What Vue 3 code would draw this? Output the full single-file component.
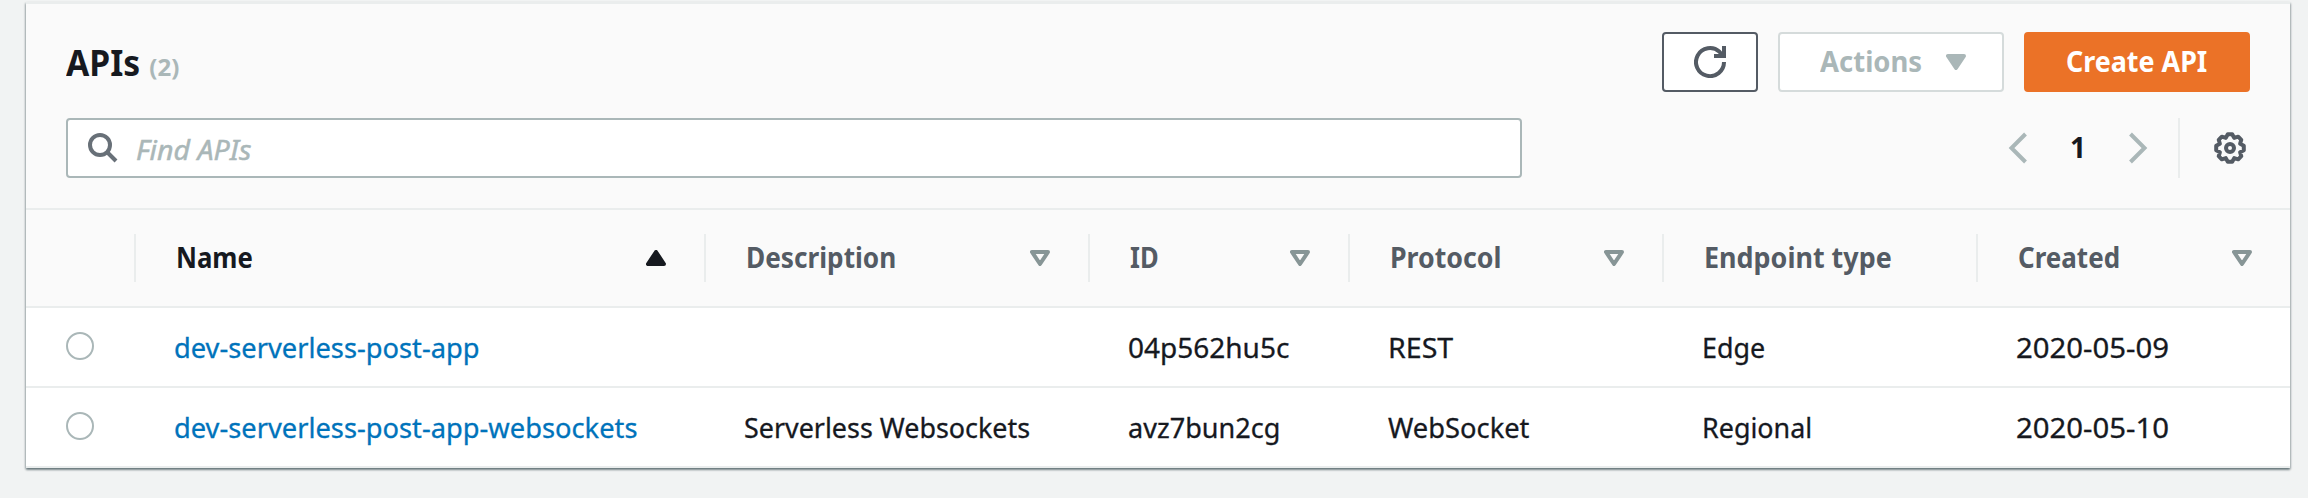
<script setup>
const columns = [
  { key: 'name', label: 'Name', sort: 'asc' },
  { key: 'description', label: 'Description', sort: 'none' },
  { key: 'id', label: 'ID', sort: 'none' },
  { key: 'protocol', label: 'Protocol', sort: 'none' },
  { key: 'endpoint', label: 'Endpoint type', sort: null },
  { key: 'created', label: 'Created', sort: 'none' },
]

const rows = [
  { name: 'dev-serverless-post-app', description: '', id: '04p562hu5c', protocol: 'REST', endpoint: 'Edge', created: '2020-05-09' },
  { name: 'dev-serverless-post-app-websockets', description: 'Serverless Websockets', id: 'avz7bun2cg', protocol: 'WebSocket', endpoint: 'Regional', created: '2020-05-10' },
]
</script>

<template>
  <main class="page">
    <section class="panel">
      <header class="head">
        <div class="title-row">
          <h1 class="title">APIs</h1>
          <span class="count">(2)</span>
          <div class="buttons">
            <button class="btn refresh" aria-label="Refresh">
              <svg width="32" height="32" viewBox="0 0 32 32" fill="none" stroke="#545b64" stroke-width="4">
                <path d="M30 16A14 14 0 1 1 25.5 5.8L29 9.5" />
                <path d="M30 0V10H20" />
              </svg>
            </button>
            <button class="btn actions">
              <span class="t-actions">Actions</span>
              <svg width="20" height="16" viewBox="0 0 20 16"><path d="M2 2H18L10 14Z" fill="#aab7b8" stroke="#aab7b8" stroke-width="4" stroke-linejoin="round" /></svg>
            </button>
            <button class="btn create"><span class="t-create">Create API</span></button>
          </div>
        </div>
        <div class="filter-row">
          <div class="search">
            <svg width="30" height="30" viewBox="0 0 30 30" fill="none" stroke="#687078" stroke-width="4">
              <circle cx="12" cy="12" r="10" />
              <path d="M19 19L28 28" />
            </svg>
            <span class="placeholder">Find APIs</span>
          </div>
          <nav class="pager">
            <svg width="20" height="32" viewBox="0 0 20 32" fill="none" stroke="#aab7b8" stroke-width="4"><path d="M17.5 2L3.5 16L17.5 30" /></svg>
            <span class="page-no">1</span>
            <svg width="20" height="32" viewBox="0 0 20 32" fill="none" stroke="#aab7b8" stroke-width="4"><path d="M2.5 2L16.5 16L2.5 30" /></svg>
          </nav>
          <div class="settings">
            <svg width="32" height="32" viewBox="0 0 32 32" fill="none" stroke="#545b64" stroke-width="4">
              <path stroke-linejoin="round" d="M13.8 2.2H18.2L20.2 5.9L24.2 4.7L27.3 7.8L26.1 11.8L29.8 13.8V18.2L26.1 20.2L27.3 24.2L24.2 27.3L20.2 26.1L18.2 29.8H13.8L11.8 26.1L7.8 27.3L4.7 24.2L5.9 20.2L2.2 18.2V13.8L5.9 11.8L4.7 7.8L7.8 4.7L11.8 5.9Z" />
              <circle cx="16" cy="16" r="4" />
            </svg>
          </div>
        </div>
      </header>

      <div class="grid thead">
        <div class="cell"></div>
        <div v-for="c in columns" :key="c.key" class="cell" :class="{ active: c.sort === 'asc' }">
          <span class="text" :class="'h-' + c.key">{{ c.label }}</span>
          <svg v-if="c.sort === 'asc'" width="20" height="16" viewBox="0 0 20 16"><path d="M2 14H18L10 2Z" fill="#16191f" stroke="#16191f" stroke-width="4" stroke-linejoin="round" /></svg>
          <svg v-else-if="c.sort" width="20" height="16" viewBox="0 0 20 16"><path d="M2 2H18L10 14Z" fill="none" stroke="#879596" stroke-width="4" stroke-linejoin="round" /></svg>
        </div>
      </div>

      <div v-for="(r, i) in rows" :key="r.id" class="grid row">
        <div class="cell"><i class="radio"></i></div>
        <div v-for="c in columns" :key="c.key" class="cell">
          <span class="text" :class="['b-' + c.key, 'r' + i]">{{ r[c.key] }}</span>
        </div>
      </div>
    </section>
  </main>
</template>

<style>
body { background: #f2f3f3; }
</style>

<style scoped>
* { box-sizing: border-box; }
.page {
  height: 498px;
  padding: 2px 18px 0 26px;
  overflow: hidden;
  background: #f1f3f3;
  font-family: "Noto Sans", "Open Sans", sans-serif;
  font-size: 28px;
  line-height: 38px;
  color: #16191f;
  white-space: nowrap;
}
.panel {
  height: 466px;
  border-top: 2px solid #eaeded;
  background: #fff;
  box-shadow: 0 2px 2px 0 rgba(0, 28, 36, 0.4), 1px 1px 2px 0 rgba(0, 28, 36, 0.2), -1px 1px 2px 0 rgba(0, 28, 36, 0.2);
}
.head {
  height: 206px;
  padding: 28px 40px 0;
  background: #fafafa;
  border-bottom: 2px solid #eaeded;
}
.title-row { display: flex; height: 60px; align-items: baseline; }
.title { margin: 0; font-size: 36px; line-height: 61px; font-weight: 700; transform: scaleX(0.935); transform-origin: 0 50%; }
.count { margin-left: 4px; font-size: 24px; font-weight: 700; color: #aab7b8; }
.buttons { display: flex; gap: 20px; margin-left: auto; align-self: flex-start; }
.btn {
  display: flex;
  height: 60px;
  align-items: center;
  justify-content: center;
  padding: 0;
  border: 2px solid;
  border-radius: 4px;
  background: #fff;
  font: inherit;
  font-weight: 700;
}
.btn span { margin-bottom: 2px; }
.refresh { width: 96px; border-color: #545b64; }
.actions { width: 226px; gap: 24px; padding-left: 2px; border-color: #d5dbdb; color: #aab7b8; }
.t-actions { transform: scaleX(0.98); transform-origin: 100% 50%; }
.create { width: 226px; border-color: #eb7227; background: #eb7227; color: #fff; }
.t-create { transform: scaleX(0.96); }
.filter-row { display: flex; height: 60px; margin-top: 26px; align-items: center; }
.search {
  display: flex;
  width: 1456px;
  height: 60px;
  padding-left: 20px;
  align-items: center;
  border: 2px solid #aab7b8;
  border-radius: 4px;
  background: #fff;
}
.placeholder { margin: 2px 0 0 18px; font-style: italic; color: #aab7b8; -webkit-text-stroke: 0.5px; transform: scaleX(1.02); transform-origin: 0 50%; }
.pager { display: flex; width: 140px; margin-left: auto; align-items: center; justify-content: space-between; }
.page-no { margin-bottom: 2px; font-weight: 700; }
.settings { display: flex; width: 72px; height: 60px; margin-left: 30px; padding-left: 34px; align-items: center; border-left: 2px solid #eaeded; }
.grid { display: grid; grid-template-columns: 108px 570px 384px 260px 314px 314px 314px; }
.cell { display: flex; align-items: center; }
.text { transform-origin: 0 50%; }
.thead { height: 98px; padding: 24px 0; border-bottom: 2px solid #eaeded; background: #fafafa; font-weight: 700; color: #545b64; }
.thead .cell { height: 48px; padding: 0 38px 0 40px; justify-content: space-between; border-left: 2px solid #eaeded; }
.thead .cell:first-child { border-left: 0; }
.thead .text { margin-bottom: 2px; }
.thead .active { color: #16191f; }
.h-name { transform: scaleX(0.92); }
.h-description { transform: scaleX(0.936); }
.h-id { transform: scaleX(0.91); }
.h-protocol { transform: scaleX(0.955); }
.h-endpoint { transform: scaleX(0.961); }
.h-created { transform: scaleX(0.928); }
.row { height: 80px; border-bottom: 2px solid #eaeded; }
.row .cell { padding-left: 40px; }
.row .text { -webkit-text-stroke: 0.3px; }
.row .cell:first-child { padding-bottom: 2px; }
.radio { width: 28px; height: 28px; border: 2px solid #aab7b8; border-radius: 50%; }
.b-name { color: #0073bb; transform: scaleX(0.974); }
.b-description { transform: scaleX(0.96); }
.b-id.r1 { transform: scaleX(0.967); }
.b-protocol.r0 { transform: scaleX(1.02); }
.b-protocol.r1 { transform: scaleX(0.975); }
.b-endpoint { transform: scaleX(0.96); }
.b-created { transform: scaleX(1.047); }
</style>
